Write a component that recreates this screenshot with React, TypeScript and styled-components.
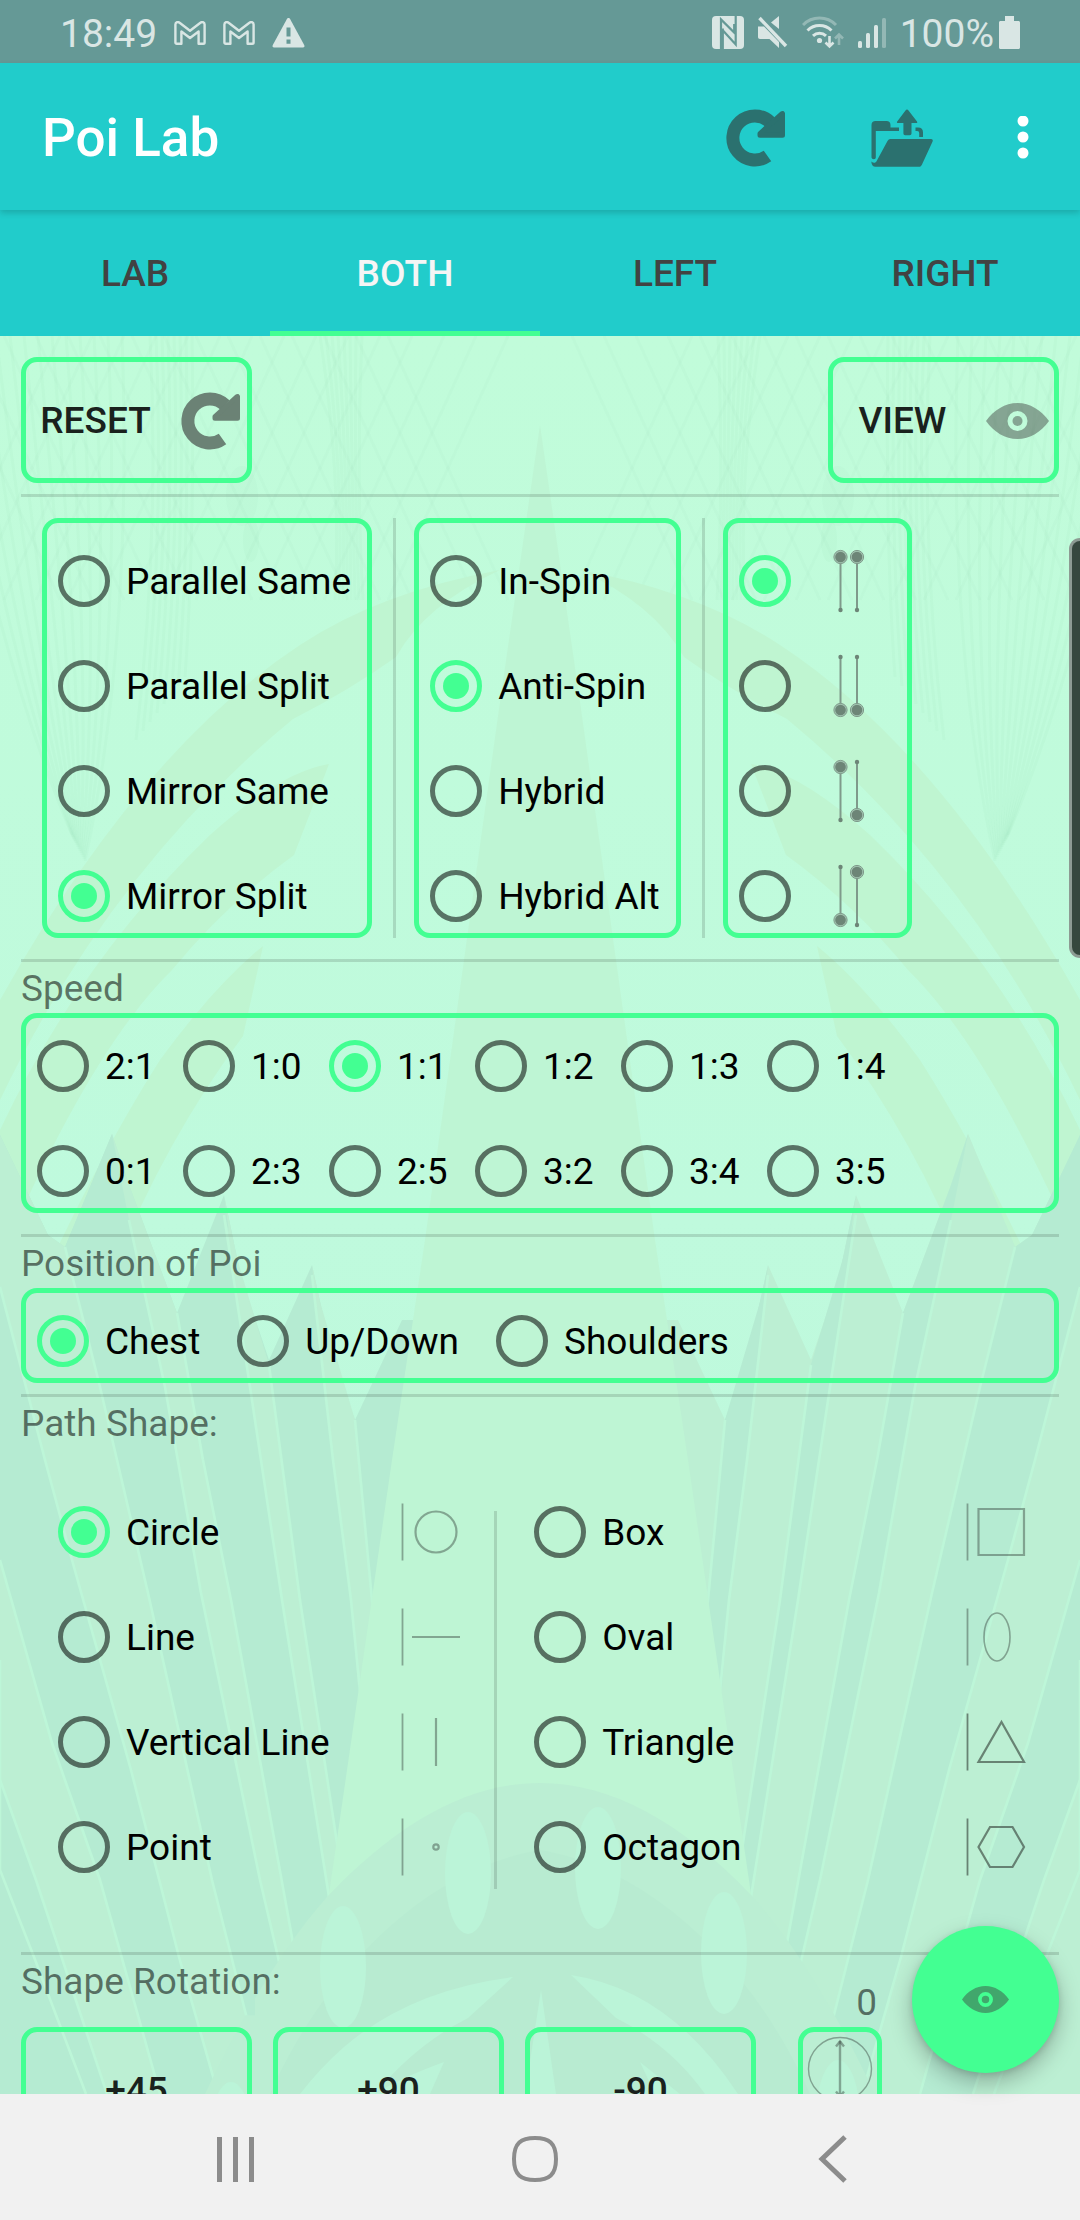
import React from 'react';
import styled, { createGlobalStyle, css } from 'styled-components';

const color = {
  status: '#659996',
  statusText: '#d9e6e4',
  bar: '#21cccb',
  barIcon: '#2b716f',
  accent: '#43ff92',
  tabText: '#424242',
  text: '#000000',
  button: '#1a211d',
  muted: 'rgba(0, 0, 0, 0.54)',
  rule: 'rgba(0, 0, 0, 0.13)',
  nav: '#f1f1f1',
  navIcon: '#8c8c8c',
};

const GlobalStyle = createGlobalStyle`
  * { box-sizing: border-box; }
  body { margin: 0; background: ${color.nav}; }
  body, button, input { font-family: Roboto, "Noto Sans", sans-serif; }
  svg { display: block; flex: none; }
`;

const Screen = styled.div`
  display: flex;
  flex-direction: column;
  height: 100vh;
  overflow: hidden;
  color: ${color.text};
  font-size: 37px;
`;

/* ---------- status bar ---------- */

const StatusBar = styled.div`
  display: flex;
  align-items: center;
  justify-content: space-between;
  flex: none;
  height: 63px;
  padding: 2px 60px 0;
  background: ${color.status};
  color: ${color.statusText};
`;

const StatusSide = styled.div<{ $gap: number }>`
  display: flex;
  align-items: center;
  gap: ${(p) => p.$gap}px;
`;

const StatusText = styled.span`
  font-size: 39px;
  line-height: 48px;
  padding-top: 2px;
`;

/* ---------- app bar and tabs ---------- */

const AppBar = styled.header`
  position: relative;
  z-index: 1;
  display: flex;
  align-items: center;
  flex: none;
  height: 147px;
  padding: 3px 42px 0;
  background: ${color.bar};
  box-shadow: 0 3px 6px rgba(0, 0, 0, 0.16);
`;

const Title = styled.h1`
  flex: 1;
  margin: 0;
  color: #ffffff;
  font-size: 53px;
  font-weight: 500;
  line-height: 62px;
`;

const BarButton = styled.button<{ $wide?: boolean }>`
  display: flex;
  align-items: center;
  justify-content: center;
  width: ${(p) => (p.$wide ? 147 : 94)}px;
  height: 126px;
  padding: 0;
  border: 0;
  background: none;
  color: ${color.barIcon};
`;

const OverflowButton = styled(BarButton)`
  width: 94px;
  margin-right: -32px;
  color: #ffffff;
`;

const Tabs = styled.nav`
  display: flex;
  flex: none;
  height: 126px;
  background: ${color.bar};
`;

const Tab = styled.button<{ $active?: boolean }>`
  flex: 1;
  padding: 2px 0 0;
  border: 0;
  background: none;
  color: ${(p) => (p.$active ? '#f5f5f5' : color.tabText)};
  font-size: 37px;
  font-weight: 500;
  line-height: 44px;
  box-shadow: ${(p) => (p.$active ? `inset 0 -5px ${color.accent}` : 'none')};
`;

/* ---------- content ---------- */

const Main = styled.main`
  display: grid;
  grid-template: minmax(0, 1fr) / minmax(0, 1fr);
  flex: 1;
  min-height: 0;
  background: #c0fbdc;

  > * { grid-area: 1 / 1; }
`;

const Backdrop = styled.svg`
  width: 100%;
  height: 100%;
`;

const Scroller = styled.form`
  z-index: 0;
  padding: 21px;
  overflow-y: auto;
  scrollbar-width: none;
`;

const ActionRow = styled.div`
  display: flex;
  justify-content: space-between;
`;

const outline = css`
  border: 5px solid ${color.accent};
  border-radius: 16px;
`;

const ActionButton = styled.button`
  ${outline}
  display: flex;
  align-items: center;
  gap: 14px;
  width: 231px;
  height: 126px;
  padding: 2px 5px 0 0;
  background: none;
  color: ${color.button};
  font-size: 37px;
  font-weight: 500;
  line-height: 44px;
`;

const ActionLabel = styled.span`
  flex: 1;
  text-align: center;
`;

const Rule = styled.hr<{ $above: number; $below?: number }>`
  height: 3px;
  margin: ${(p) => p.$above}px 0 ${(p) => p.$below ?? 0}px;
  border: 0;
  background: ${color.rule};
`;

const VerticalRule = styled.div`
  width: 3px;
  background: ${color.rule};
`;

const SectionLabel = styled.h2`
  margin: 0;
  padding-top: 3px;
  color: ${color.muted};
  font-size: 37px;
  font-weight: 400;
  line-height: 48px;
`;

const ModeRow = styled.div`
  display: flex;
  padding: 0 21px;

  > ${VerticalRule} { margin: 0 18px 0 21px; }
`;

const fieldsetReset = css`
  min-width: 0;
  margin: 0;
  padding: 0;
  border: 0;
`;

/* The outline is an inset shadow, so that rows can run over its inner edge. */
const boxed = css`
  border-radius: 16px;
  box-shadow: inset 0 0 0 5px ${color.accent};
`;

const ModeGroup = styled.fieldset`
  ${fieldsetReset}
  ${boxed}
`;

const SpeedGroup = styled.fieldset`
  ${fieldsetReset}
  ${boxed}
  display: grid;
  grid-template-columns: repeat(6, 146px);
  row-gap: 21px;
  padding-top: 11px;
`;

const PositionGroup = styled.fieldset`
  ${fieldsetReset}
  ${boxed}
  display: flex;
  padding-top: 11px;
`;

const ShapeGroup = styled.fieldset`
  ${fieldsetReset}
  display: grid;
  grid-template-columns: 16fr 3px 19fr;
  margin-top: 21px;

  > ${VerticalRule} { margin-top: 42px; }
`;

const ShapeColumn = styled.div`
  padding: 0 21px;
`;

const Option = styled.label<{ $stacked?: boolean; $tail?: number }>`
  display: flex;
  align-items: center;
  height: 84px;
  margin-top: ${(p) => (p.$stacked ? 21 : 0)}px;
  padding-right: ${(p) => p.$tail ?? 0}px;
  line-height: 44px;
  white-space: nowrap;
`;

const OptionText = styled.span`
  flex: 1;
  padding-top: 2px;
`;

const Radio = styled.input`
  appearance: none;
  display: grid;
  place-items: center;
  flex: none;
  width: 52px;
  height: 52px;
  margin: 0 16px;
  border: 5px solid ${color.muted};
  border-radius: 50%;

  &:checked { border-color: ${color.accent}; }

  &:checked::before {
    content: '';
    width: 26px;
    height: 26px;
    border-radius: 50%;
    background: ${color.accent};
  }
`;

const RotationGrid = styled.div`
  display: grid;
  grid-template-columns: repeat(3, 231px) 105px;
  column-gap: 21px;
`;

const RotationLabel = styled(SectionLabel)`
  grid-column: 1 / 4;
`;

const RotationValue = styled.output`
  padding: 24px 5px 0 0;
  color: ${color.muted};
  line-height: 48px;
  text-align: right;
`;

const RotationButton = styled(ActionButton)`
  justify-content: center;
  padding: 2px 0 0;
`;

const DialButton = styled.button`
  ${outline}
  display: flex;
  justify-content: center;
  justify-self: end;
  width: 84px;
  height: 84px;
  padding: 4px 0;
  background: none;
`;

const Fab = styled.button`
  z-index: 1;
  display: flex;
  align-items: center;
  justify-content: center;
  align-self: end;
  justify-self: end;
  width: 147px;
  height: 147px;
  margin: 21px;
  padding: 0;
  border: 0;
  border-radius: 50%;
  background: ${color.accent};
  box-shadow: 0 10px 22px rgba(0, 0, 0, 0.26), 0 2px 6px rgba(0, 0, 0, 0.12);
`;

const EdgeHandle = styled.div`
  position: absolute;
  top: 538px;
  right: 0;
  z-index: 2;
  width: 11px;
  height: 420px;
  border: 3px solid #8d9b93;
  border-right: 0;
  border-radius: 11px 0 0 11px;
  background: #36483e;
`;

/* ---------- system navigation ---------- */

const NavBar = styled.nav`
  display: flex;
  flex: none;
  height: 126px;
  padding: 0 9% 0 8%;
  background: ${color.nav};
`;

const NavButton = styled.button`
  display: flex;
  align-items: center;
  justify-content: center;
  flex: 1;
  padding: 4px 0 0;
  border: 0;
  background: none;
  color: ${color.navIcon};
`;

/* ---------- icons ---------- */

const MailIcon = () => (
  <svg width="32" height="24" viewBox="0 0 32 24" fill="none" stroke="currentColor" strokeWidth="2.4" strokeLinejoin="round">
    <path d="M1.4 3.4C1.4 1 4.2 .6 5.6 1.8L16 9.8 26.400 1.800C27.800 .6 30.600 1 30.600 3.400V21.500C30.600 22.300 30 22.800 29.300 22.800H24.600V10.500L16 17 7.400 10.500V22.800H2.700C2 22.800 1.400 22.300 1.400 21.500Z" />
  </svg>
);

const WarningIcon = () => (
  <svg width="33" height="30" viewBox="0 0 33 30">
    <path d="M16.500 0c.8 0 1.300 .5 1.700 1.200l14 25.800c.7 1.300 .2 2.500-1.300 2.500H2.100C.6 29.500 .1 28.300 .8 27L14.800 1.200C15.200 .5 15.700 0 16.500 0z" fill="currentColor" />
    <path d="M14.500 9.500h4v9h-4zM14.500 21.500h4v4.200h-4z" fill={color.status} />
  </svg>
);

const NfcIcon = () => (
  <svg width="32" height="33" viewBox="0 0 32 33">
    <rect width="32" height="33" rx="4" fill="currentColor" />
    <path d="M9 33V3.500L22.200 16.500V8M10.800 12.500V33M10.500 14L23.700 28.500V0" fill="none" stroke={color.status} strokeWidth="2.200" />
  </svg>
);

const MuteIcon = () => (
  <svg width="30" height="33" viewBox="0 0 30 33" fill="currentColor">
    <path d="M0 10.500h6L21 26v6L11.500 23H2C.8 23 0 22 0 21z" />
    <path d="M21 0v13L13 6.500z" />
    <path d="M1.500 2L28 30" stroke="currentColor" strokeWidth="3.400" />
  </svg>
);

const WifiIcon = () => (
  <svg width="42" height="33" viewBox="0 0 42 33" fill="none" stroke="currentColor" strokeWidth="3">
    <path d="M1 9a23 23 0 0 1 33 0" opacity=".4" />
    <path d="M5.500 14.500a17 17 0 0 1 24 0M11 19.800a9.500 9.500 0 0 1 13 0" />
    <circle cx="17.500" cy="24.500" r="2.600" fill="currentColor" stroke="none" />
    <path d="M27.500 20v10M23.500 26.500l4 4 4-4" strokeWidth="2.600" />
    <path d="M37 29V19M33 22.500l4-4 4 4" strokeWidth="2.600" opacity=".4" />
  </svg>
);

const SignalIcon = () => (
  <svg width="28" height="32" viewBox="0 0 28 32" fill="currentColor">
    <rect y="24" width="4" height="7" rx="1.500" />
    <rect x="8" y="16" width="4" height="15" rx="1.500" />
    <rect x="16" y="8" width="4" height="23" rx="1.500" />
    <rect x="24" y="1" width="4" height="30" rx="1.500" opacity=".4" />
  </svg>
);

const BatteryIcon = () => (
  <svg width="21" height="33" viewBox="0 0 21 33" fill="currentColor">
    <path d="M6 0h9v5h4.500c.8 0 1.500 .7 1.500 1.500v25c0 .8-.7 1.500-1.500 1.500h-18C.7 33 0 32.300 0 31.500v-25C0 5.700 .7 5 1.500 5H6z" />
  </svg>
);

const RedoIcon = ({ fill }: { fill: string }) => (
  <svg width="63" height="63" viewBox="0 0 63 63">
    <path d="M43.500 49A22 22 0 1 1 46 15" fill="none" stroke={fill} strokeWidth="13" />
    <path d="M57.500 7L58.500 6.500V28.300H36V26.500Z" fill={fill} stroke={fill} strokeWidth="5" strokeLinejoin="round" />
  </svg>
);

const FolderIcon = () => (
  <svg width="63" height="59" viewBox="0 0 63 59" fill="currentColor">
    <path d="M36 0.500c.6 0 1 .4 1.500 1L46 12.500c.6 1 .2 1.500-.8 1.500H40.500V24.500q0 1.800-1.800 1.800h-4.500q-1.800 0-1.800-1.800V14H27c-1 0-1.400-.6-.8-1.500L34.500 1.500c.5-.6 .9-1 1.500-1z" />
    <path d="M.5 16C.5 13.500 2 12 4.500 12H15.500c2.500 0 4 1.500 4 4v2.500H28V22H4.800V48.500q0 1.800-2 1.800T.5 48.500z" />
    <path d="M44.500 18.500h2.500q5 0 5 5V28h-3.800v-4q0-2-2-2h-1.700z" />
    <path d="M19.500 30H60c1.500 0 2.200 1 1.600 2.400L51 55.500c-.8 1.600-1.500 2.300-3 2.300H4.500C2 57.800 .5 56 .3 52.500c2.500 2 4.300 1.500 5.500-.8L16.500 32c.8-1.300 1.600-2 3-2z" />
  </svg>
);

const MoreIcon = () => (
  <svg width="12" height="44" viewBox="0 0 12 44" fill="currentColor">
    <circle cx="6" cy="5" r="5.500" />
    <circle cx="6" cy="21" r="5.500" />
    <circle cx="6" cy="37" r="5.500" />
  </svg>
);

const EyeIcon = ({ width }: { width: number }) => (
  <svg width={width} height={Math.round((width * 36) / 63)} viewBox="0 0 63 36" fill="#404040" fillOpacity=".46">
    <path fillRule="evenodd" d="M0 18C8 7 19 0 31.500 0S55 7 63 18C55 29 44 36 31.500 36S8 29 0 18ZM31.500 8a10 10 0 1 0 0 20 10 10 0 1 0 0-20Z" />
    <circle cx="31.500" cy="18" r="5" />
  </svg>
);

/* Two poi on their leashes; `up` tells on which end the head sits. */
const PoiIcon = ({ left, right }: { left: 'up' | 'down'; right: 'up' | 'down' }) => (
  <svg width="84" height="84" viewBox="0 0 84 84">
    {([[33.5, left], [50, right]] as const).map(([x, end]) => {
      const s = end === 'up' ? -1 : 1;
      return (
        <g key={x} fill="#6d8577" stroke="#7f9a8b">
          <path d={`M${x} ${42 + s * 24}V${42 - s * 29}`} strokeWidth="2" />
          <circle cx={x} cy={42 - s * 29} r="2.200" stroke="none" />
          <circle cx={x} cy={42 + s * 24} r="6.600" fill="#a3c6b2" strokeWidth="1" />
          <circle cx={x} cy={42 + s * 24} r="5.300" stroke="none" />
        </g>
      );
    })}
  </svg>
);

const ShapeIcon = ({ strong, children }: { strong?: boolean; children: React.ReactNode }) => (
  <svg width="84" height="84" viewBox="0 0 84 84" fill="none" stroke="#303a34" strokeWidth="2.200" strokeOpacity={strong ? 0.6 : 0.42}>
    <path d="M13.500 13.500V70.500" strokeWidth="1.800" />
    {children}
  </svg>
);

const DialIcon = () => (
  <svg width="66" height="66" viewBox="0 0 66 66" fill="none" stroke="#303a34" strokeOpacity=".42">
    <circle cx="33" cy="33" r="31.500" strokeWidth="1.400" />
    <path d="M33 5V61" strokeWidth="2.400" />
    <path d="M29 10.500L33 5.500 37 10.500M29 55.500L33 60.500 37 55.500" strokeWidth="2.400" />
  </svg>
);

/* ---------- backdrop drawing ---------- */

type Line = string;

// Edges of the fanned leaves, from the outermost to the stem, each top to bottom.
const fan: Line[] = [
  '0,1660 0,1870 34,1957 86,2094',
  '0,1780 36,1880 107,2094',
  '0,1560 52,1743 100,1880 160,2094',
  '0,1287 45,1460 72,1560 131,1770 179,1957 218,2094',
  '65,1247 100,1387 148,1593 212,1880 266,2094',
  '129,1220 165,1387 201,1593 260,1880 310,2094',
  '177,1313 203,1460 231,1600 293,1943 330,2094',
  '224,1215 250,1387 282,1600 329,1897 350,2094',
  '269,1365 300,1600 337,1843 370,2094',
  '312,1275 333,1460 351,1600 400,2094',
  '355,1420 372,1600 430,2094',
];

const outlineOfFan =
  '0,1135 48,1235 65,1247 112,1134 129,1185 177,1313 224,1195 241,1277 269,1360 312,1265 335,1370 355,1420 402,1320 440,1320 440,2094 0,2094';

const reverse = (line: Line) => line.split(' ').reverse().join(' ');

// Faces run dark, light, dark from the edge inwards; `darkFirst` picks where they start.
const Fan = ({ darkFirst }: { darkFirst: boolean }) => {
  const ground = darkFirst ? '#b5ebd2' : '#bcefd3';
  const face = darkFirst ? '#bcefd3' : '#b5ebd2';
  return (
    <g>
      <polygon points={outlineOfFan} fill={ground} />
      {fan.slice(0, -1).map((line, i) =>
        i % 2 === 1 ? (
          <polygon key={line} points={`${line} ${reverse(fan[i + 1])}`} fill={face} />
        ) : null,
      )}
      <polygon points="0,1135 48,1235 65,1247 100,1387 148,1593 212,1880 266,2094 218,2094 179,1957 131,1770 72,1560 45,1460 0,1287" fill={face} />
      <polygon points="65,1247 112,1134 129,1220 165,1387 201,1593 260,1880 310,2094 266,2094 212,1880 148,1593 100,1387" fill={ground} />
      <polygon points="112,1134 129,1185 177,1313 203,1460 231,1600 293,1943 330,2094 310,2094 260,1880 201,1593 165,1387 129,1220" fill={face} />
      <polygon points="224,1195 241,1277 269,1365 300,1600 337,1843 329,1897 282,1600 250,1387" fill={face} />
      <polygon points="312,1265 335,1370 355,1420 372,1600 358,1687 351,1600 333,1460" fill={face} />
      <g fill="none" stroke="#bdf6d8" strokeWidth="2.600">
        {fan.map((line) => (
          <polyline key={line} points={line} />
        ))}
      </g>
    </g>
  );
};

const Arcs = () => (
  <g fill="#bff5d1">
    <path d="M500 570Q380 592 300 645Q140 750 0 1000V1100Q110 870 293 719Q350 690 396 657Q425 605 500 570Z" />
    <path d="M329 764Q280 772 210 835Q80 960 0 1130V1260Q90 1050 172 970Q225 905 294 855Z" />
    <path d="M263 946Q215 985 160 1060Q90 1170 20 1330L90 1330Q150 1160 243 1036Z" />
  </g>
);

// Woven net hanging from the top edge, gathered at a knot.
const Net = () => (
  <g fill="none" stroke="#1d6b52" strokeOpacity=".025" strokeWidth="3">
    {Array.from({ length: 14 }, (_, i) => (
      <path key={`k${i}`} d={`M${-60 + i * 14} 336Q${-10 + i * 11} 640 ${72 + i} ${835 + i * 2}`} />
    ))}
    {Array.from({ length: 8 }, (_, i) => (
      <path key={`s${i}`} d={`M${150 + i * 6} 336Q${160 + i * 5} 540 ${136 + i * 7} ${740 - i * 9}`} />
    ))}
    {Array.from({ length: 8 }, (_, i) => (
      <path key={`t${i}`} d={`M${320 + i * 6} 336Q${342 + i * 2} 480 ${335 + i * 4} 600`} />
    ))}
    {Array.from({ length: 15 }, (_, i) => (
      <path key={`a${i}`} d={`M${i * 32 - 60} 336L${i * 32 + 60} 600`} strokeOpacity=".018" />
    ))}
    {Array.from({ length: 15 }, (_, i) => (
      <path key={`b${i}`} d={`M${i * 32 + 60} 336L${i * 32 - 60} 600`} strokeOpacity=".018" />
    ))}
    <ellipse cx="251" cy="540" rx="8" ry="22" fill="#1d6b52" fillOpacity=".025" stroke="none" />
    <ellipse cx="242" cy="496" rx="16" ry="30" fill="#1d6b52" fillOpacity=".018" stroke="none" />
  </g>
);

const BackdropArt = () => (
  <Backdrop viewBox="0 336 1080 1758" preserveAspectRatio="xMidYMin slice" aria-hidden="true">
    <defs>
      <linearGradient id="sky" x1="0" y1="0" x2="0" y2="1">
        <stop offset="0" stopColor="#c1fcda" />
        <stop offset=".5" stopColor="#bffadd" />
        <stop offset="1" stopColor="#bcf6da" />
      </linearGradient>
    </defs>
    <rect y="336" width="1080" height="1758" fill="url(#sky)" />
    <Net />
    <g transform="matrix(-1 0 0 1 1080 0)"><Net /></g>
    <Arcs />
    <g transform="matrix(-1 0 0 1 1080 0)"><Arcs /></g>
    <Fan darkFirst />
    <g transform="matrix(-1 0 0 1 1080 0)"><Fan darkFirst={false} /></g>
    <polygon points="540,425 499,709 425,1240 392,1460 300,2094 780,2094 688,1460 655,1240 581,709" fill="#bef5d4" />
    <path d="M540 1783C470 1783 400 1820 327 1897C280 1950 240 2020 205 2094H875C840 2020 800 1950 753 1897C680 1820 610 1783 540 1783Z" fill="#bbeed3" />
    <path d="M540 1850C420 1870 320 1980 270 2094H810C760 1980 660 1870 540 1850Z" fill="#b8ebd1" />
    <g fill="#bbf4d8">
      <ellipse cx="468" cy="1873" rx="23" ry="61" />
      <ellipse cx="598" cy="1868" rx="23" ry="61" />
      <ellipse cx="343" cy="1967" rx="23" ry="61" />
      <ellipse cx="724" cy="1953" rx="23" ry="61" />
      <ellipse cx="231" cy="2140" rx="22" ry="58" />
      <ellipse cx="838" cy="2118" rx="22" ry="58" />
      <path d="M513 1977Q410 1990 344 2047Q320 2068 300 2094H375Q415 2045 468 2018Z" />
      <path d="M571 1975Q670 1990 738 2094H705Q670 2045 616 2018Z" />
      <path d="M444 2062Q400 2078 375 2094H430Z" />
      <path d="M640 2062Q660 2078 680 2094H655Z" />
      <path d="M541 1990L525 2094H556Z" />
    </g>
  </Backdrop>
);

/* ---------- data ---------- */

const paths = ['Parallel Same', 'Parallel Split', 'Mirror Same', 'Mirror Split'];
const spins = ['In-Spin', 'Anti-Spin', 'Hybrid', 'Hybrid Alt'];
const starts = [
  { left: 'up', right: 'up', name: 'Both up' },
  { left: 'down', right: 'down', name: 'Both down' },
  { left: 'up', right: 'down', name: 'Left up' },
  { left: 'down', right: 'up', name: 'Right up' },
] as const;
const speeds = ['2:1', '1:0', '1:1', '1:2', '1:3', '1:4', '0:1', '2:3', '2:5', '3:2', '3:4', '3:5'];
const positions = ['Chest', 'Up/Down', 'Shoulders'];

const shapesLeft = [
  { name: 'Circle', icon: <ShapeIcon><circle cx="47" cy="42" r="20.500" /></ShapeIcon> },
  { name: 'Line', icon: <ShapeIcon><path d="M23 42H71" /></ShapeIcon> },
  { name: 'Vertical Line', icon: <ShapeIcon><path d="M47 18V66" /></ShapeIcon> },
  { name: 'Point', icon: <ShapeIcon><circle cx="47" cy="42" r="2.700" /></ShapeIcon> },
];

const shapesRight = [
  { name: 'Box', icon: <ShapeIcon><path d="M24.500 19H70V65H24.500Z" /></ShapeIcon> },
  { name: 'Oval', icon: <ShapeIcon><ellipse cx="43" cy="42" rx="13" ry="24" strokeWidth="1.600" /></ShapeIcon> },
  { name: 'Triangle', icon: <ShapeIcon strong><path d="M47.500 22L70 62H24.500Z" /></ShapeIcon> },
  { name: 'Octagon', icon: <ShapeIcon strong><path d="M24.500 42L36 22H58.500L70 42 58.500 62H36Z" /></ShapeIcon> },
];

const ShapeOptions = ({ items }: { items: typeof shapesLeft }) => (
  <ShapeColumn>
    {items.map((item) => (
      <Option key={item.name} $stacked>
        <Radio type="radio" name="shape" defaultChecked={item.name === 'Circle'} />
        <OptionText>{item.name}</OptionText>
        {item.icon}
      </Option>
    ))}
  </ShapeColumn>
);

export default function App() {
  return (
    <Screen>
      <GlobalStyle />
      <StatusBar>
        <StatusSide $gap={17}>
          <StatusText>18:49</StatusText>
          <MailIcon />
          <MailIcon />
          <WarningIcon />
        </StatusSide>
        <StatusSide $gap={14}>
          <NfcIcon />
          <MuteIcon />
          <WifiIcon />
          <SignalIcon />
          <StatusSide $gap={5}>
            <StatusText>100%</StatusText>
            <BatteryIcon />
          </StatusSide>
        </StatusSide>
      </StatusBar>

      <AppBar>
        <Title>Poi Lab</Title>
        <BarButton type="button" $wide aria-label="Reset">
          <RedoIcon fill={color.barIcon} />
        </BarButton>
        <BarButton type="button" $wide aria-label="Open">
          <FolderIcon />
        </BarButton>
        <OverflowButton type="button" aria-label="More options">
          <MoreIcon />
        </OverflowButton>
      </AppBar>

      <Tabs>
        <Tab type="button">LAB</Tab>
        <Tab type="button" $active aria-current="page">BOTH</Tab>
        <Tab type="button">LEFT</Tab>
        <Tab type="button">RIGHT</Tab>
      </Tabs>

      <Main>
        <BackdropArt />
        <Scroller>
          <ActionRow>
            <ActionButton type="button">
              <ActionLabel>RESET</ActionLabel>
              <RedoIcon fill="#6b8275" />
            </ActionButton>
            <ActionButton type="button">
              <ActionLabel>VIEW</ActionLabel>
              <EyeIcon width={63} />
            </ActionButton>
          </ActionRow>
          <Rule $above={11} $below={21} />

          <ModeRow>
            <ModeGroup aria-label="Direction">
              {paths.map((name) => (
                <Option key={name} $stacked $tail={21}>
                  <Radio type="radio" name="direction" defaultChecked={name === 'Mirror Split'} />
                  <OptionText>{name}</OptionText>
                </Option>
              ))}
            </ModeGroup>
            <VerticalRule />
            <ModeGroup aria-label="Spin">
              {spins.map((name) => (
                <Option key={name} $stacked $tail={21}>
                  <Radio type="radio" name="spin" defaultChecked={name === 'Anti-Spin'} />
                  <OptionText>{name}</OptionText>
                </Option>
              ))}
            </ModeGroup>
            <VerticalRule />
            <ModeGroup aria-label="Start">
              {starts.map((s, i) => (
                <Option key={s.name} $stacked $tail={21}>
                  <Radio type="radio" name="start" aria-label={s.name} defaultChecked={i === 0} />
                  <PoiIcon left={s.left} right={s.right} />
                </Option>
              ))}
            </ModeGroup>
          </ModeRow>

          <Rule $above={21} />
          <SectionLabel>Speed</SectionLabel>
          <SpeedGroup aria-label="Speed">
            {speeds.map((name) => (
              <Option key={name}>
                <Radio type="radio" name="speed" defaultChecked={name === '1:1'} />
                <OptionText>{name}</OptionText>
              </Option>
            ))}
          </SpeedGroup>

          <Rule $above={21} />
          <SectionLabel>Position of Poi</SectionLabel>
          <PositionGroup aria-label="Position of Poi">
            {positions.map((name) => (
              <Option key={name} $tail={21}>
                <Radio type="radio" name="position" defaultChecked={name === 'Chest'} />
                <OptionText>{name}</OptionText>
              </Option>
            ))}
          </PositionGroup>

          <Rule $above={11} />
          <SectionLabel>Path Shape:</SectionLabel>
          <ShapeGroup aria-label="Path Shape">
            <ShapeOptions items={shapesLeft} />
            <VerticalRule />
            <ShapeOptions items={shapesRight} />
          </ShapeGroup>

          <Rule $above={63} />
          <RotationGrid>
            <RotationLabel>Shape Rotation:</RotationLabel>
            <RotationValue>0</RotationValue>
            <RotationButton type="button">+45</RotationButton>
            <RotationButton type="button">+90</RotationButton>
            <RotationButton type="button">-90</RotationButton>
            <DialButton type="button" aria-label="Rotation dial">
              <DialIcon />
            </DialButton>
          </RotationGrid>
        </Scroller>
        <Fab type="button" aria-label="View">
          <EyeIcon width={47} />
        </Fab>
      </Main>

      <NavBar>
        <NavButton type="button" aria-label="Recent apps">
          <svg width="38" height="45" viewBox="0 0 38 45" fill="currentColor">
            <path d="M0 0h5v45H0zM16 0h5v45h-5zM32 0h5v45h-5z" />
          </svg>
        </NavButton>
        <NavButton type="button" aria-label="Home">
          <svg width="48" height="48" viewBox="0 0 48 48" fill="none" stroke="currentColor" strokeWidth="4">
            <path d="M24 3C38 3 45 8 45 24S38 45 24 45 3 40 3 24 10 3 24 3Z" />
          </svg>
        </NavButton>
        <NavButton type="button" aria-label="Back">
          <svg width="30" height="48" viewBox="0 0 30 48" fill="none" stroke="currentColor" strokeWidth="5">
            <path d="M27 2L4 24 27 46" />
          </svg>
        </NavButton>
      </NavBar>
      <EdgeHandle />
    </Screen>
  );
}
